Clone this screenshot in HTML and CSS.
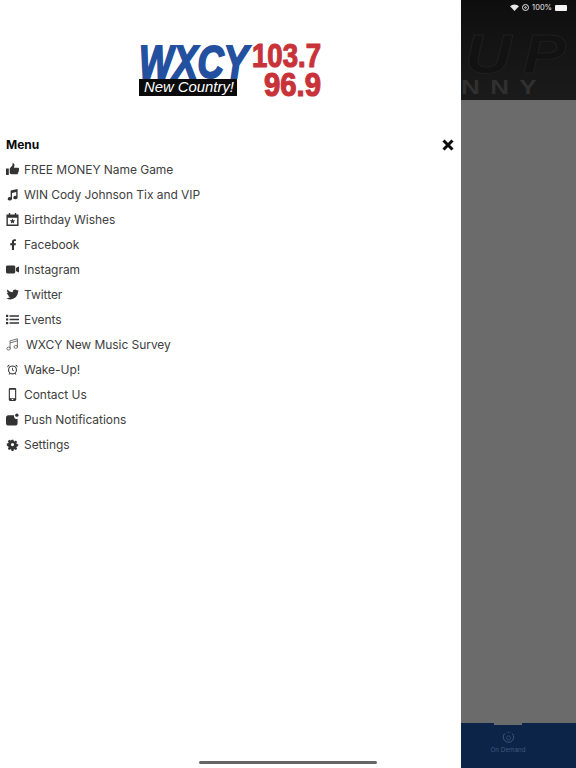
FILE: index.html
```html
<!DOCTYPE html>
<html lang="en">
<head>
    <meta charset="UTF-8">
    <meta name="viewport" content="width=device-width, initial-scale=1.0">
    <title>WXCY Menu</title>
    <link rel="stylesheet" href="styles.css">
</head>
<body>
    <div class="screen">
        <div class="drawer">
            <div class="logo">
                <svg width="184" height="54" viewBox="0 0 184 54">
                    <text class="logo-call" x="0" y="35" textLength="109" lengthAdjust="spacingAndGlyphs">WXCY</text>
                    <rect x="0" y="36" width="98" height="17" fill="#0a0a0a"/>
                    <text class="logo-tag" x="5" y="49" textLength="90" lengthAdjust="spacingAndGlyphs">New Country!</text>
                    <text class="logo-freq" x="113" y="24" textLength="69" lengthAdjust="spacingAndGlyphs">103.7</text>
                    <text class="logo-freq" x="125" y="52.500" textLength="57" lengthAdjust="spacingAndGlyphs">96.9</text>
                </svg>
            </div>

            <div class="menu-head">
                <span class="menu-title">Menu</span>
                <svg class="close" width="12" height="12" viewBox="0 0 12 12">
                    <path d="M1.500 1.500 L10.500 10.500 M10.500 1.500 L1.500 10.500" stroke="#0a0a0a" stroke-width="3"/>
                </svg>
            </div>

            <ul class="menu">
                <li>
                    <svg class="icon" viewBox="0 0 14 14"><path d="M0 6h3v7H0z M4 6l3-3.500V.5c1.600-.5 2.500 1 2 2.500L8.500 5H13c1.200 0 1.300 1.300.7 1.800.6.700.4 1.500-.2 1.900.3.800 0 1.400-.6 1.700.2 1-.3 1.800-1.400 1.800H7c-1.300 0-2-.7-3-.8z"/></svg>
                    <a href="#">FREE MONEY Name Game</a>
                </li>
                <li>
                    <svg class="icon" viewBox="0 0 14 14"><path d="M12.500 1 5 2.800V10a2.300 1.800 0 1 0 1.500 1.700V5.500l4.500-1.100V8.600a2.300 1.800 0 1 0 1.500 1.700z"/></svg>
                    <a href="#">WIN Cody Johnson Tix and VIP</a>
                </li>
                <li>
                    <svg class="icon" viewBox="0 0 14 14"><path fill-rule="evenodd" d="M3 0h1.500v1.500h5V0H11v1.500h2.500V14H.5V1.500H3zM2 5v7.500h10V5zM7 5.800l.9 1.900 2 .2-1.500 1.400.4 2L7 10.300l-1.800 1 .4-2-1.500-1.400 2-.2z"/></svg>
                    <a href="#">Birthday Wishes</a>
                </li>
                <li>
                    <svg class="icon" viewBox="0 0 14 14"><path d="M8.600 13V7.800h1.800l.3-2.100H8.600V4.400c0-.6.300-1.100 1.100-1.100h1V1.500C10.400 1.400 9.800 1.300 9.200 1.300 7.500 1.300 6.400 2.400 6.400 4.200v1.500H4.500v2.100h1.900V13z"/></svg>
                    <a href="#">Facebook</a>
                </li>
                <li>
                    <svg class="icon" viewBox="0 0 14 14"><path d="M1.500 2.800h7c.8 0 1.500.7 1.500 1.500v5.400c0 .8-.7 1.500-1.500 1.500h-7C.7 11.200 0 10.500 0 9.700V4.300c0-.8.700-1.500 1.500-1.500zM10.800 5.500 13 4c.5-.3 1 0 1 .6v4.800c0 .6-.5.900-1 .6l-2.200-1.500z"/></svg>
                    <a href="#">Instagram</a>
                </li>
                <li>
                    <svg class="icon" viewBox="0 0 14 14"><path d="M14 2.900c-.5.200-1 .4-1.600.4.600-.3 1-.9 1.200-1.500-.5.300-1.100.6-1.800.7C11.300 1.900 10.600 1.600 9.800 1.600 8.200 1.600 7 3 7.300 4.600 5 4.500 2.900 3.400 1.500 1.700.8 3 1.200 4.600 2.400 5.400 1.900 5.400 1.500 5.300 1.100 5.100c0 1.300.9 2.500 2.300 2.800-.4.100-.9.100-1.300 0 .4 1.100 1.400 1.900 2.700 1.900C3.600 10.800 2 11.200.4 11 1.700 11.900 3.200 12.300 4.800 12.300c5.300 0 8.300-4.400 8.100-8.400.5-.3 1-.6 1.100-1z"/></svg>
                    <a href="#">Twitter</a>
                </li>
                <li>
                    <svg class="icon" viewBox="0 0 14 14"><path d="M0 2h2.400v2.400H0zM0 5.800h2.400v2.400H0zM0 9.600h2.400V12H0zM3.800 2.400H14v1.600H3.800zM3.800 6.200H14v1.600H3.800zM3.800 10H14v1.600H3.800z"/></svg>
                    <a href="#">Events</a>
                </li>
                <li class="wide">
                    <svg class="icon thin" viewBox="0 0 16 16" fill="none"><path d="M5 13V3.500L14 1v9.800M5 6l9-2.500"/><ellipse cx="3.200" cy="13" rx="2.200" ry="1.800"/><ellipse cx="12" cy="11" rx="2.200" ry="1.800"/></svg>
                    <a href="#">WXCY New Music Survey</a>
                </li>
                <li>
                    <svg class="icon" viewBox="-1 -1 16 16"><path fill-rule="evenodd" d="M7 2a5.500 5.500 0 0 1 3.800 9.500l1 1.300-.9.700-1.100-1.200a5.500 5.500 0 0 1-5.600 0l-1.100 1.200-.9-.7 1-1.300A5.500 5.500 0 0 1 7 2zm0 1.300a4.200 4.200 0 1 0 0 8.400 4.200 4.200 0 0 0 0-8.400zM6.500 4.800h1v2.700l1.700 1-.5.800-2.200-1.300zM1 4.500C.1 3.200 1.500.9 3.600 1.200zM13 4.500c.9-1.300-.5-3.600-2.600-3.300z"/></svg>
                    <a href="#">Wake-Up!</a>
                </li>
                <li>
                    <svg class="icon" viewBox="0 0 14 14"><path fill-rule="evenodd" d="M4.300 0h5.400C10.500 0 11 .6 11 1.500v11c0 .9-.5 1.500-1.300 1.500H4.300C3.500 14 3 13.400 3 12.500v-11C3 .6 3.500 0 4.300 0zM4.200 2v9h5.600V2zM6.200 11.900v1h1.600v-1z"/></svg>
                    <a href="#">Contact Us</a>
                </li>
                <li>
                    <svg class="icon" viewBox="0 0 14 14"><path d="M2.500 2.500h6.200a3 3 0 0 0 3.800 3.800V11c0 1.400-1.100 2.500-2.500 2.500h-7.500C1.100 13.500 0 12.400 0 11V5c0-1.400 1.100-2.500 2.500-2.500z"/><circle cx="11.700" cy="2.300" r="1.800"/></svg>
                    <a href="#">Push Notifications</a>
                </li>
                <li>
                    <svg class="icon" viewBox="-1 -1 16 16"><path fill-rule="evenodd" d="M5.800 1h2.400l.3 1.700 1.100.5 1.500-1 1.700 1.700-1 1.400.5 1.200 1.700.3v2.400l-1.700.3-.5 1.100 1 1.500-1.700 1.700-1.500-1-1.100.5-.3 1.700H5.800l-.3-1.700-1.100-.5-1.500 1-1.700-1.700 1-1.500-.5-1.100L0 8.200V5.800l1.700-.3.500-1.200-1-1.400 1.700-1.700 1.500 1 1.100-.5zM7 5a2 2 0 1 0 0 4 2 2 0 0 0 0-4z"/></svg>
                    <a href="#">Settings</a>
                </li>
            </ul>
        </div>

        <div class="side">
            <div class="banner">
                <span class="banner-big">UP</span>
                <span class="banner-small">NNY</span>
            </div>
            <div class="dim"></div>
            <div class="tabbar">
                <div class="tab">
                    <div class="tab-notch"></div>
                    <svg width="13" height="13" viewBox="0 0 16 16" fill="none" stroke="#41587b" stroke-width="1.200"><path d="M3.200 3.200a6.400 6.400 0 1 0 9.600 0"/><path d="M5.500 1.500h5" stroke-dasharray="1 1"/><circle cx="8" cy="8.500" r="2.500" stroke-width=".8"/></svg>
                    <span class="tab-label">On Demand</span>
                </div>
            </div>
        </div>

        <div class="status">
            <svg width="9" height="7" viewBox="0 0 9 7"><path d="M4.500 7 0 2.300a6.400 6.400 0 0 1 9 0z" fill="#e8e8e8"/></svg>
            <svg width="7" height="7" viewBox="0 0 7 7" fill="none" stroke="#e8e8e8"><circle cx="3.500" cy="3.500" r="3"/><circle cx="3.500" cy="3.500" r=".8"/></svg>
            <span>100%</span>
            <span class="battery"></span>
        </div>
        <div class="home-bar"></div>
    </div>
</body>
</html>
```

FILE: styles.css
```css
html, body {
    margin: 0;
    padding: 0;
}

body {
    font-family: Inter, "Noto Sans", sans-serif;
    background-color: #ffffff;
}

.screen {
    position: relative;
    display: flex;
    width: 576px;
    height: 768px;
    overflow: hidden;
}

.drawer {
    width: 461px;
    height: 768px;
    background-color: #ffffff;
    flex-shrink: 0;
}

.logo {
    display: flex;
    justify-content: center;
    padding-top: 43px;
    height: 89px;
}

.logo svg {
    display: block;
    overflow: visible;
}

.logo-call {
    font-family: "Liberation Sans", sans-serif;
    font-weight: 700;
    font-style: italic;
    font-size: 47px;
    fill: #23509f;
    stroke: #23509f;
    stroke-width: 2px;
}

.logo-tag {
    font-family: "Liberation Sans", sans-serif;
    font-style: italic;
    font-size: 14px;
    fill: #ffffff;
}

.logo-freq {
    font-family: "Liberation Sans", sans-serif;
    font-weight: 700;
    font-size: 33px;
    fill: #c8333a;
    stroke: #c8333a;
    stroke-width: 1.200px;
}

.menu-head {
    display: flex;
    justify-content: space-between;
    align-items: center;
    height: 25px;
    padding: 0 7px 0 6px;
}

.menu-title {
    font-size: 12px;
    font-weight: 700;
    color: #0a0a0a;
}

.close {
    display: block;
}

.menu {
    list-style: none;
    margin: 0;
    padding: 0 0 0 6px;
}

.menu li {
    display: flex;
    align-items: center;
    gap: 5px;
    height: 25px;
}

.menu li.wide {
    gap: 7px;
}

.menu a {
    font-size: 12px;
    letter-spacing: -0.05px;
    color: #404040;
    text-decoration: none;
}

.icon {
    width: 13px;
    height: 13px;
    fill: #333333;
    flex-shrink: 0;
}

.icon.thin {
    fill: none;
    stroke: #555555;
    stroke-width: 1;
}

.side {
    flex: 1;
    display: flex;
    flex-direction: column;
    min-width: 0;
}

.banner {
    position: relative;
    height: 100px;
    background: linear-gradient(#0e0e0e, #1b1b1b);
    overflow: hidden;
    flex-shrink: 0;
}

.banner-big {
    position: absolute;
    left: 4px;
    top: 21px;
    font-family: "Liberation Sans", sans-serif;
    font-size: 56px;
    font-weight: 700;
    font-style: italic;
    letter-spacing: 10px;
    color: #121212;
    -webkit-text-stroke: 1px #1f1f1f;
    transform: scaleX(1.15);
    transform-origin: left top;
}

.banner-small {
    position: absolute;
    left: 0;
    top: 76px;
    font-family: "Liberation Sans", sans-serif;
    font-size: 20px;
    font-weight: 700;
    letter-spacing: 8px;
    color: #303030;
    transform: scaleX(1.3);
    transform-origin: left top;
}

.dim {
    flex: 1;
    background-color: #6b6b6b;
}

.tabbar {
    height: 45px;
    background-color: #0c2448;
    flex-shrink: 0;
}

.tab {
    position: relative;
    width: 94px;
    display: flex;
    flex-direction: column;
    align-items: center;
    padding-top: 8px;
}

.tab-notch {
    position: absolute;
    top: 0;
    left: 33px;
    width: 28px;
    height: 2px;
    background-color: #6b6b6b;
}

.tab-label {
    font-size: 6.300px;
    margin-top: 2px;
    color: #41587b;
}

.status {
    position: absolute;
    top: 3px;
    right: 9px;
    display: flex;
    align-items: center;
    gap: 3px;
    height: 9px;
    font-size: 7.500px;
    color: #e8e8e8;
}

.battery {
    width: 12px;
    height: 6px;
    background-color: #f2f2f2;
    border-radius: 1px;
}

.home-bar {
    position: absolute;
    left: 199px;
    bottom: 4px;
    width: 178px;
    height: 3px;
    border-radius: 2px;
    background-color: #666666;
}
```
